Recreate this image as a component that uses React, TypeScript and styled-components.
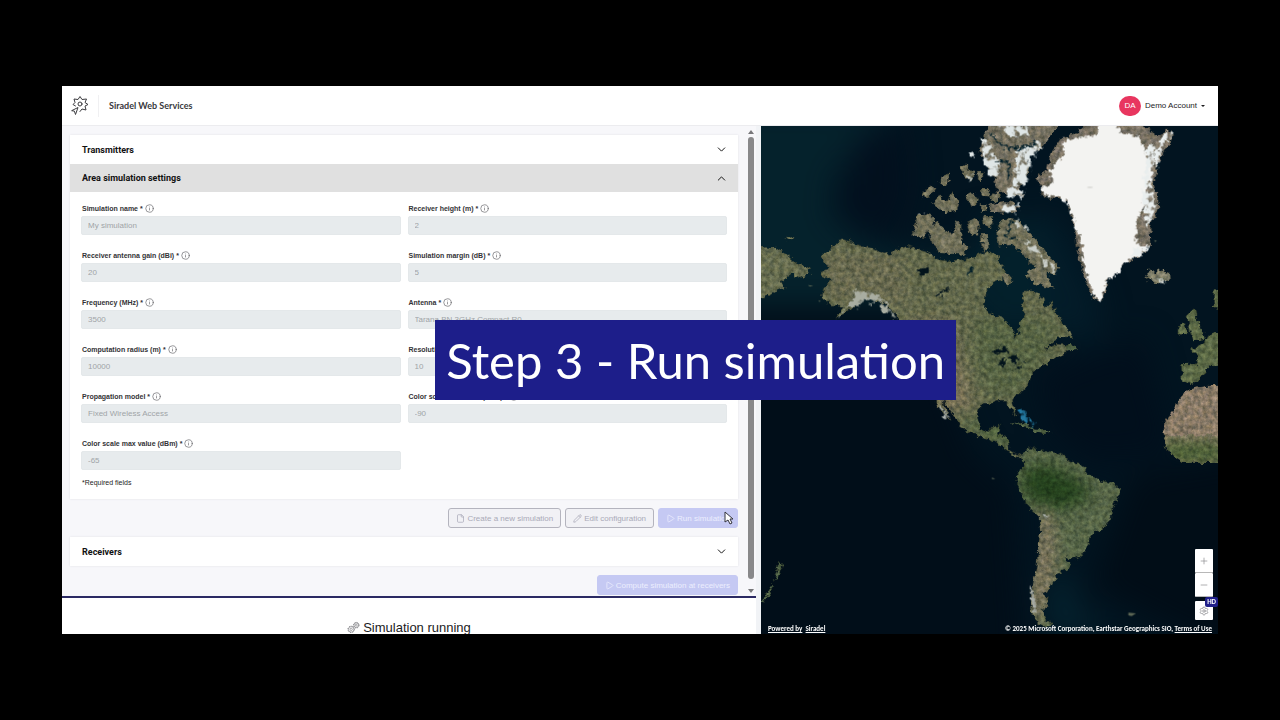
import React from "react";
import styled, { createGlobalStyle } from "styled-components";
import { ChevronDown, ChevronUp, File, Info, Minus, Pencil, Play, Plus, Settings } from "lucide-react";

const GlobalStyle = createGlobalStyle`
  * { box-sizing: border-box; }
  body {
    margin: 0;
    background: #000;
    color: #1c1c1e;
    font-family: "Liberation Sans", Arial, sans-serif;
    font-size: 8px;
  }
  button, input { font: inherit; }
  svg { display: block; }
`;

const Stage = styled.div`
  position: relative;
  display: flex;
  min-height: 100vh;
  padding: 86px 62px;
  background: #000;
`;

const Window = styled.div`
  flex: 1;
  min-width: 0;
  display: flex;
  flex-direction: column;
  background: #fff;
`;

const Header = styled.header`
  display: flex;
  align-items: center;
  height: 40px;
  padding: 0 13px 0 9px;
  border-bottom: 1px solid #ececef;
`;

const LogoBox = styled.div`
  display: flex;
  align-items: center;
  width: 28px;
  height: 22px;
  margin-right: 10px;
  border-right: 1px solid #f0f0f2;
`;

const Brand = styled.h1`
  flex: 1;
  margin: 0;
  font: 700 9px/12px Lato, sans-serif;
  color: #38383c;
`;

const Account = styled.button`
  display: flex;
  align-items: center;
  gap: 4px;
  padding: 0;
  border: 0;
  background: none;
  font-size: 8px;
  color: #1c1c1e;
`;

const Avatar = styled.span`
  display: grid;
  place-items: center;
  width: 22px;
  height: 20px;
  border-radius: 10px;
  background: #e8365f;
  color: #fff;
`;

const Caret = styled.span`
  border: 2px solid transparent;
  border-top-color: #1c1c1e;
  border-bottom: 0;
`;

const Body = styled.div`
  flex: 1;
  min-height: 0;
  display: flex;
`;

const Side = styled.main`
  flex: 1;
  min-width: 0;
  display: flex;
  flex-direction: column;
  padding-right: 5px;
  background: #f1f3f6;
`;

const Scroller = styled.div`
  display: flex;
  gap: 8px;
  height: 472px;
  padding-left: 8px;
  background: #f7f7fa;
  border-bottom: 2px solid #2b2a63;
`;

const Panels = styled.div`
  flex: 1;
  min-width: 0;
  padding-top: 9px;
`;

const ScrollTrack = styled.div`
  display: flex;
  flex-direction: column;
  align-items: center;
  width: 10px;
  padding: 4px 1px 1px;
  gap: 3px;
`;

const ScrollArrow = styled.span<{ $down?: boolean }>`
  border: 3px solid transparent;
  ${(p) => (p.$down ? "border-top: 4px solid #77777a; border-bottom: 0;" : "border-bottom: 4px solid #77777a; border-top: 0;")}
`;

const ScrollThumb = styled.div`
  width: 6px;
  height: 442px;
  margin-bottom: 7px;
  border-radius: 3px;
  background: #88888a;
`;

const Card = styled.section`
  background: #fff;
  box-shadow: 0 0 2px #e2e2e6;
`;

const CardTitle = styled.button<{ $open?: boolean }>`
  display: flex;
  align-items: center;
  justify-content: space-between;
  width: 100%;
  height: ${(p) => (p.$open ? 28 : 29)}px;
  padding: 0 10px 0 12px;
  border: 0;
  background: ${(p) => (p.$open ? "#e0e0e0" : "#fff")};
  font-family: Roboto, sans-serif;
  font-size: 9px;
  font-weight: 700;
  color: #111;
  text-align: left;
`;

const Form = styled.form`
  padding: 10px 11px;
`;

const Fields = styled.div`
  display: grid;
  grid-template-columns: 1fr 1fr;
  gap: 14px 7px;
`;

const Label = styled.label`
  display: flex;
  align-items: center;
  gap: 2px;
  height: 14px;
  padding: 0 0 2px 1px;
  font-size: 7px;
  font-weight: 700;
  color: #333336;
  svg { color: #66666a; }
`;

const Input = styled.input`
  display: block;
  width: 100%;
  height: 19px;
  padding: 0 6px;
  border: 1px solid #e4e8ea;
  border-radius: 2px;
  background: #e7ebed;
  font-size: 8px;
  color: #a0a4a7;
`;

const Required = styled.p`
  margin: 7px 0 0;
  padding-left: 1px;
  font-size: 7px;
  line-height: 12px;
`;

const Actions = styled.div`
  display: flex;
  justify-content: flex-end;
  gap: 4px;
  padding: 9px 0;
`;

const Button = styled.button<{ $primary?: boolean }>`
  display: flex;
  align-items: center;
  gap: 2px;
  height: 20px;
  padding: 0 7px;
  border: 1px solid ${(p) => (p.$primary ? "#c5c9f3" : "#b4b4be")};
  border-radius: 3px;
  background: ${(p) => (p.$primary ? "#c5c9f3" : "#f1f1f5")};
  color: ${(p) => (p.$primary ? "#eceefe" : "#aaaab8")};
  font-size: 8px;
  white-space: nowrap;
`;

const Running = styled.div`
  flex: 1;
  display: flex;
  align-items: center;
  justify-content: center;
  gap: 3px;
  padding-top: 23px;
  background: #fff;
  font-size: 13px;
  line-height: 13px;
  overflow: hidden;
`;

const MapPane = styled.section`
  position: relative;
  flex: 0 0 457px;
  overflow: hidden;
  background: #031521;
  font: 700 7px/10px Carlito, Lato, sans-serif;
  color: #fff;
`;

const MapArt = styled.svg`
  position: absolute;
  inset: 0;
  width: 100%;
  height: 100%;
`;

const MapFooter = styled.div`
  position: absolute;
  left: 7px;
  right: 6px;
  bottom: 0;
  display: flex;
  justify-content: space-between;
  a { color: inherit; text-decoration: underline; }
`;

const MapControls = styled.div`
  position: absolute;
  right: 5px;
  bottom: 14px;
  display: flex;
  flex-direction: column;
`;

const MapButton = styled.button<{ $gap?: boolean }>`
  position: relative;
  display: grid;
  place-items: center;
  width: 18px;
  height: ${(p) => (p.$gap ? 19 : 24)}px;
  margin-top: ${(p) => (p.$gap ? 4 : 0)}px;
  padding: 0;
  border: 0;
  border-bottom: ${(p) => (p.$gap ? 0 : 1)}px solid #b8b8b8;
  border-radius: 1px;
  background: #fff;
  color: #88888c;
`;

const Badge = styled.span`
  position: absolute;
  top: -4px;
  right: -5px;
  padding: 0 2px;
  border-radius: 2px;
  background: #20208a;
  color: #fff;
  font: 700 7px/10px Carlito, Lato, sans-serif;
`;

const Banner = styled.div`
  position: absolute;
  top: 50%;
  left: 34%;
  margin-top: -40px;
  padding: 0 11px;
  background: #1d1e8a;
  color: #fff;
  font: 400 49px/80px Lato, sans-serif;
  white-space: nowrap;
`;

const Pointer = styled.svg`
  position: absolute;
  right: 1px;
  top: 3px;
`;

const PointerHost = styled.div`
  position: relative;
`;

const LAND = {
  northAmerica:
    "M245 358L290 372L340 385L385 402L410 388L440 378L480 390L510 400L535 418L580 425L620 415L660 402L690 390L715 410L735 450L725 480L700 490L680 515L673 560L690 580L730 595L755 625L765 650L778 640L775 612L795 592L785 552L795 512L820 512L850 532L857 562L875 545L890 582L930 632L940 655L905 650L870 672L850 690L885 672L918 672L935 690L900 705L870 725L840 740L820 760L805 780L800 805L765 825L755 840L770 875L765 888L750 865L740 845L710 845L690 852L660 855L652 885L660 925L685 935L702 915L723 915L715 945L745 952L748 990L775 1005L790 998L787 1014L765 1010L740 992L715 970L680 955L640 945L600 920L570 870L548 842L560 880L573 900L562 896L530 855L524 838L500 800L480 720L450 650L415 595L380 560L345 538L310 535L285 555L265 575L225 597L250 560L215 560L185 535L190 505L215 480L175 462L205 445L180 410L215 380Z",
  southAmerica:
    "M785 1005L805 985L820 982L828 990L860 992L900 1000L930 1020L965 1035L980 1060L1020 1078L1070 1095L1082 1110L1075 1130L1057 1160L1053 1200L1020 1235L992 1245L985 1270L960 1310L940 1318L915 1310L932 1335L920 1350L885 1362L890 1375L870 1405L850 1420L868 1435L850 1470L860 1500L880 1518L850 1520L830 1510L810 1470L815 1410L830 1330L840 1230L835 1190L800 1155L768 1095L770 1065L792 1035Z",
  africa: "M1285 808L1320 800L1400 790V1030L1300 1028L1270 1030L1240 1010L1215 980L1208 920L1215 900L1240 870L1262 830Z",
  europe:
    "M1263 732L1310 730L1312 705L1292 690L1330 670L1350 640L1400 630V735L1345 740L1330 765L1315 785L1290 796L1265 785Z",
  britain: "M1280 585L1305 562L1310 590L1325 625L1335 655L1300 665L1290 640ZM1257 615L1275 605L1282 640L1255 645ZM1360 510L1400 500V570L1360 560Z",
  asia: "M-20 380L50 383L85 405L110 430L145 445L150 460L130 477L95 460L65 480L78 505L40 520L-20 545ZM76 352L95 347L104 357L85 363Z",
  iceland: "M1158 450L1175 448L1185 458L1205 448L1228 455L1230 475L1205 492L1180 488L1160 475Z",
  baffin:
    "M710 320L735 295L775 300L800 330L840 370L860 400L895 440L890 465L860 458L885 510L850 500L810 480L790 470L822 440L785 400L755 375L715 380ZM725 460L745 455L760 490L735 495Z",
  ellesmere:
    "M690 0H905L850 80L800 110L810 150L780 200L790 230L740 225L710 215L700 170L660 90L672 40ZM690 252L750 243L778 262L755 280L695 276Z",
  arctic:
    "M470 285L490 280L527 292L520 315L490 355L460 345ZM505 330L530 305L550 325L578 342L590 300L605 305L605 370L632 380L610 405L540 400L515 370ZM480 230L510 195L527 205L505 235ZM515 250L535 225L560 245L575 215L598 245L590 270L550 277ZM535 185L568 152L570 185L550 197ZM598 140L615 132L640 160L638 185L615 170ZM615 225L645 215L655 245L635 265ZM620 310L640 290L658 300L655 345L630 340ZM668 290L700 290L690 325L670 315ZM662 345L688 345L690 385L668 395ZM650 155L668 155L670 180L655 180ZM658 210L685 210L690 230L668 228ZM690 230L718 210L720 235L700 245ZM662 255L680 255L680 275L662 275Z",
  caribbean: "M745 908L775 903L810 918L835 930L800 925L770 912ZM825 925L850 928L875 938L850 942L823 936ZM920 670L937 668L955 690L930 694L922 688Z",
  newZealand: "M55 1320L70 1335L55 1370L40 1385L50 1350ZM36 1390L42 1400L10 1450L3 1450Z",
};

const GREENLAND_ROCK =
  "M900 57L950 40L990 0L1130 0L1190 45L1225 28L1243 42L1235 60L1195 125L1182 190L1200 262L1172 312L1175 372L1140 407L1100 422L1048 470L1028 545L1000 540L980 492L960 432L948 370L945 330L922 245L900 235L850 232L828 170L860 150L872 95Z";
const GREENLAND_ICE =
  "M905 62L950 55L1010 45L1020 0H1070L1080 38L1130 45L1155 90L1165 120L1180 150L1160 210L1148 262L1130 310L1128 372L1165 380L1140 405L1100 422L1065 470L1040 480L1024 540L1008 534L990 500L975 440L964 362L945 320L928 255L900 232L850 225L845 200L880 190L868 165L892 120L915 100Z";

function WorldMap() {
  return (
    <MapArt viewBox="3 18 1371 1524" preserveAspectRatio="xMidYMid slice" role="img" aria-label="Satellite map">
      <defs>
        <filter id="sea-depth" x="-10%" y="-10%" width="120%" height="120%" colorInterpolationFilters="sRGB">
          <feGaussianBlur stdDeviation="45" />
        </filter>
        <filter id="terrain" x="-5%" y="-5%" width="110%" height="110%" colorInterpolationFilters="sRGB">
          <feTurbulence type="fractalNoise" baseFrequency="0.06" numOctaves="4" seed="7" result="rough" />
          <feDisplacementMap in="SourceGraphic" in2="rough" scale="22" xChannelSelector="R" yChannelSelector="G" result="coast" />
          <feTurbulence type="fractalNoise" baseFrequency="0.07" numOctaves="5" seed="3" />
          <feColorMatrix values="1.3 0.2 0 0 -0.2  1.1 0.2 0.1 0 -0.15  1.1 0 0.3 0 -0.18  0 0 0 0 1" result="grain" />
          <feComposite in="coast" in2="grain" operator="arithmetic" k1="0.7" k2="0.6" k3="0" k4="0" result="shaded" />
          <feComposite in="shaded" in2="coast" operator="in" />
        </filter>
        <filter id="snow" x="-5%" y="-5%" width="110%" height="110%" colorInterpolationFilters="sRGB">
          <feTurbulence type="fractalNoise" baseFrequency="0.07" numOctaves="4" seed="9" />
          <feDisplacementMap in="SourceGraphic" scale="28" xChannelSelector="R" yChannelSelector="G" />
        </filter>
        <filter id="patchy" x="-5%" y="-5%" width="110%" height="110%" colorInterpolationFilters="sRGB">
          <feTurbulence type="fractalNoise" baseFrequency="0.05" numOctaves="4" seed="12" result="n" />
          <feDisplacementMap in="SourceGraphic" in2="n" scale="36" xChannelSelector="R" yChannelSelector="G" result="d" />
          <feColorMatrix in="n" values="0 0 0 0 1  0 0 0 0 1  0 0 0 0 1  6 0 0 0 -2.1" result="holes" />
          <feComposite in="d" in2="holes" operator="in" />
        </filter>
        <filter id="tint" colorInterpolationFilters="sRGB"><feGaussianBlur stdDeviation="22" /></filter>
        <clipPath id="continents">
          <path d={LAND.northAmerica + LAND.southAmerica + LAND.africa} />
        </clipPath>
      </defs>

      <rect x="3" y="18" width="1371" height="1524" fill="#021420" />
      <g filter="url(#sea-depth)">
        <path d="M-100 -50H420L230 160L210 290L330 370L420 400L900 420V560H-100Z" fill="#05222c" />
        <path d="M290 60L430 0L450 200L410 340L330 340L230 280Z" fill="#02101e" />
        <path d="M660 300H900V640H660Z" fill="#03202b" />
        <path d="M850 250L940 380L1020 560L1000 700L940 640L860 600Z" fill="#031c29" />
        <path d="M-100 560H480L640 1000L760 1100L800 1642H-100Z" fill="#010e19" />
        <path d="M830 760L1150 650L1240 1000L1000 1030L880 940Z" fill="#010f1c" />
        <path d="M880 1370L930 1370L920 1480L1060 1520L880 1530Z" fill="#062c38" />
        <path d="M1474 1000L1120 1060L1000 1400L1474 1642Z" fill="#010d17" />
      </g>

      <g filter="url(#terrain)">
        <path d={LAND.northAmerica} fill="#646a4e" />
        <g clipPath="url(#continents)">
          <g filter="url(#tint)">
            <path d="M180 400L420 400L450 560L200 540Z" fill="#6a6b52" />
            <path d="M440 600L570 600L640 860L560 880L480 760Z" fill="#797159" />
            <path d="M650 590L900 600L860 720L780 830L680 820L640 700Z" fill="#586546" />
            <path d="M580 900L750 900L760 1000Z" fill="#4f6340" />
          </g>
        </g>
        <path d={LAND.southAmerica} fill="#58674a" />
        <g clipPath="url(#continents)">
          <g filter="url(#tint)">
            <path d="M780 1050L860 1030L960 1080L1000 1130L900 1170L800 1140Z" fill="#26431f" />
            <path d="M830 1160L880 1190L890 1330L860 1500L800 1500Z" fill="#7a735e" />
          </g>
        </g>
        <path d={LAND.africa} fill="#8a7b69" />
        <g clipPath="url(#continents)">
          <path d="M1200 955L1400 960V1040H1200Z" fill="#4c6038" filter="url(#tint)" />
        </g>
        <path d={LAND.europe + LAND.britain} fill="#5c6a48" />
        <path d={LAND.asia} fill="#686e52" />
        <path d={LAND.iceland} fill="#7c7c68" />
        <path d={LAND.baffin + LAND.arctic} fill="#72715c" />
        <path d={LAND.ellesmere} fill="#777263" />
        <path d={LAND.caribbean + LAND.newZealand} fill="#526548" />
        <path d={GREENLAND_ROCK} fill="#777064" />
      </g>

      <path d={GREENLAND_ICE} fill="#f3f3f1" filter="url(#snow)" />
      <ellipse cx="990" cy="202" rx="9" ry="3" fill="#dededb" />
      <g filter="url(#patchy)">
        <path d="M1125 385L1172 378L1155 398L1110 420ZM1210 38L1243 35L1205 90L1195 145L1185 110ZM1160 90L1190 70L1175 180L1190 270L1160 330L1150 250Z" fill="#e9eeee" />
        <path d="M715 18L800 15L810 50L750 55ZM665 60L690 60L700 95L720 125L715 170L690 170L672 110ZM770 90L830 60L850 80L820 110L810 150L800 195L755 195L770 140ZM745 205L795 205L790 236L745 230ZM725 248L780 252L770 278L725 274ZM630 95L644 95L644 114L632 114Z" fill="#dfe6e6" />
        <path d="M765 300L790 300L810 330L780 325ZM800 355L825 370L845 400L805 390ZM845 405L890 440L880 462L855 445ZM1190 478L1215 468L1218 484L1200 490ZM618 160L640 165L634 188ZM475 280L492 280L488 295L475 295Z" fill="#c8cdc8" />
        <path d="M270 560L285 510L330 515L380 545L410 600L400 600L352 550L315 543L290 565ZM232 595L270 560L262 575Z" fill="#a9ada1" />
        <path d="M850 1182L866 1184L862 1198ZM812 1400L828 1440L830 1495L812 1450ZM530 845L548 862L572 895L550 885Z" fill="#a9aeaa" />
      </g>

      <g fill="#03131b">
        <path d="M478 450L505 440L510 455L490 470L472 460ZM525 525L570 503L560 515L530 532ZM695 695L735 680L745 695L710 700ZM720 720L735 710L732 745L720 740ZM745 710L770 705L778 720L760 735ZM757 745L785 738L775 748ZM778 732L800 728L790 735Z" filter="url(#snow)" />
      </g>
      <g fill="none" stroke="#04202a" strokeWidth="6" filter="url(#snow)">
        <path d="M690 40L730 80L780 85L830 70M705 120L750 130L745 180M755 300L740 350L770 360M640 440L620 470" />
      </g>
      <g fill="#2f9bcc" opacity="0.75" filter="url(#patchy)">
        <path d="M775 868L798 872L805 905L784 900ZM805 900L832 912L812 922Z" />
      </g>
      <path d="M1105 1478L1128 1480L1115 1488L1105 1486ZM1182 360L1190 362L1186 366ZM695 1073L706 1076L697 1078ZM175 540L182 543L178 546ZM143 495L160 497L150 500Z" fill="#5c6654" />
    </MapArt>
  );
}

function Logo() {
  return (
    <svg width="18" height="20" viewBox="0 0 36 40" fill="none" stroke="#3c3c40" strokeWidth="2" strokeLinejoin="round" strokeLinecap="round" aria-hidden="true">
      <path d="M9 20L4 17L8 13L6 6L14 7L18 1L22 7L31 6L28 13L34 17L28 20L30 28L22 26L18 31" />
      <circle cx="18" cy="16" r="4" />
      <path d="M2 29L14 23L9 37L7 31Z" />
    </svg>
  );
}

function Gears() {
  return (
    <svg width="13" height="13" viewBox="0 0 28 28" fill="none" stroke="#77777b" strokeWidth="1.3" aria-hidden="true">
      <circle cx="9" cy="18" r="6" />
      <circle cx="9" cy="18" r="7" strokeDasharray="2.5 3" strokeWidth="2" />
      <circle cx="9" cy="18" r="2.5" />
      <circle cx="20" cy="9" r="5" />
      <circle cx="20" cy="9" r="6" strokeDasharray="2.5 2.2" strokeWidth="2" />
      <circle cx="20" cy="9" r="2" />
    </svg>
  );
}

const FIELDS: Array<[string, string, string]> = [
  ["name", "Simulation name", "My simulation"],
  ["height", "Receiver height (m)", "2"],
  ["gain", "Receiver antenna gain (dBi)", "20"],
  ["margin", "Simulation margin (dB)", "5"],
  ["frequency", "Frequency (MHz)", "3500"],
  ["antenna", "Antenna", "Tarana BN 3GHz Compact R0"],
  ["radius", "Computation radius (m)", "10000"],
  ["resolution", "Resolution (m)", "10"],
  ["model", "Propagation model", "Fixed Wireless Access"],
  ["scale-min", "Color scale min value (dBm)", "-90"],
  ["scale-max", "Color scale max value (dBm)", "-65"],
];

export default function App() {
  return (
    <>
      <GlobalStyle />
      <Stage>
        <Window>
          <Header>
            <LogoBox><Logo /></LogoBox>
            <Brand>Siradel Web Services</Brand>
            <Account type="button">
              <Avatar>DA</Avatar>
              Demo Account
              <Caret />
            </Account>
          </Header>
          <Body>
            <Side>
              <Scroller>
                <Panels>
                  <Card>
                    <CardTitle type="button">
                      Transmitters
                      <ChevronDown size={13} strokeWidth={1.8} />
                    </CardTitle>
                    <CardTitle type="button" $open>
                      Area simulation settings
                      <ChevronUp size={13} strokeWidth={1.8} />
                    </CardTitle>
                    <Form>
                      <Fields>
                        {FIELDS.map(([id, label, value]) => (
                          <div key={id}>
                            <Label htmlFor={id}>
                              {label} *
                              <Info size={9} strokeWidth={1.8} />
                            </Label>
                            <Input id={id} defaultValue={value} disabled />
                          </div>
                        ))}
                      </Fields>
                      <Required>*Required fields</Required>
                    </Form>
                  </Card>
                  <Actions>
                    <Button type="button" disabled><File size={9} />Create a new simulation</Button>
                    <Button type="button" disabled><Pencil size={9} />Edit configuration</Button>
                    <PointerHost>
                      <Button type="button" disabled $primary><Play size={9} />Run simulation</Button>
                      <Pointer width="14" height="14" viewBox="0 0 14 14" aria-hidden="true">
                        <path d="M2 1V11L5 9L7 13L9 12L7 8H10Z" fill="#fff" stroke="#33333c" strokeWidth="1" />
                      </Pointer>
                    </PointerHost>
                  </Actions>
                  <Card>
                    <CardTitle type="button">
                      Receivers
                      <ChevronDown size={13} strokeWidth={1.8} />
                    </CardTitle>
                  </Card>
                  <Actions>
                    <Button type="button" disabled $primary><Play size={9} />Compute simulation at receivers</Button>
                  </Actions>
                </Panels>
                <ScrollTrack>
                  <ScrollArrow />
                  <ScrollThumb />
                  <ScrollArrow $down />
                </ScrollTrack>
              </Scroller>
              <Running><Gears />Simulation running</Running>
            </Side>
            <MapPane>
              <WorldMap />
              <MapControls>
                <MapButton type="button" aria-label="Zoom in"><Plus size={10} strokeWidth={1.6} /></MapButton>
                <MapButton type="button" aria-label="Zoom out"><Minus size={10} strokeWidth={1.6} /></MapButton>
                <MapButton type="button" $gap aria-label="Map settings">
                  <Settings size={10} strokeWidth={1.8} />
                  <Badge>HD</Badge>
                </MapButton>
              </MapControls>
              <MapFooter>
                <span><a href="#powered">Powered by</a>&nbsp;&nbsp;<a href="#siradel">Siradel</a></span>
                <span>© 2025 Microsoft Corporation, Earthstar Geographics SIO, <a href="#terms">Terms of Use</a></span>
              </MapFooter>
            </MapPane>
          </Body>
        </Window>
        <Banner>Step 3 - Run simulation</Banner>
      </Stage>
    </>
  );
}
